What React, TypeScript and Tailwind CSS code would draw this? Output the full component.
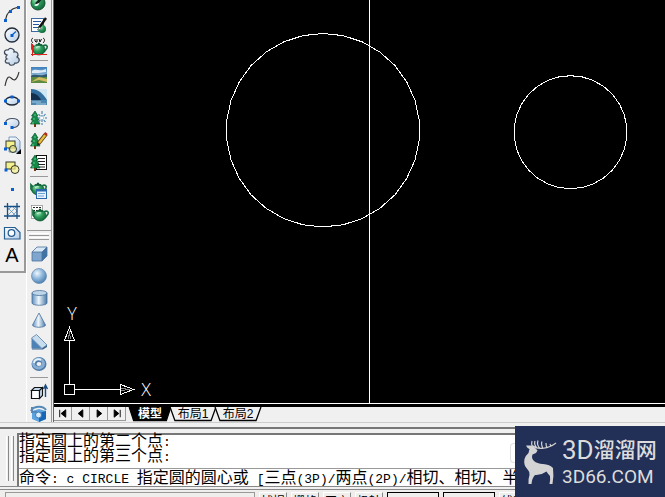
import type { ReactNode } from "react"

interface Tool {
  label: string
  icon: ReactNode
}

const BLUE = "#0a5fd0"

function Dot({ x, y }: { x: number; y: number }) {
  return <rect x={x - 1.5} y={y - 1.5} width={3} height={3} fill={BLUE} />
}

function Teapot({ x = 0, y = 0 }: { x?: number; y?: number }) {
  return (
    <g transform={`translate(${x} ${y})`}>
      <path d="M3 5 1 3v4l3 4" fill="none" stroke="#176f43" strokeWidth={1.8} />
      <path d="M12 4c3-2 5 0 4 2l-3 4" fill="none" stroke="#176f43" strokeWidth={1.6} />
      <ellipse cx={8} cy={7.5} rx={6} ry={5.5} fill="url(#green)" stroke="#105a34" strokeWidth={0.7} />
      <path d="M5 3h6M7 1.500h2" stroke="#105a34" strokeWidth={1.5} />
      <path d="M5 6c1-1.500 3-1.500 4-1" stroke="#c6f2d4" strokeWidth={1} fill="none" />
    </g>
  )
}

function Tree() {
  return (
    <g>
      <path d="M5 1 1.500 6H3L1 10h2l-2.500 4H10L7.500 10H9L6.500 6H8z" fill="#158a48" stroke="#0b5a30" strokeWidth={0.7} />
      <path d="M4 5h2M3 9h2M2 13h2" stroke="#5bd08a" />
      <path d="M5 14v3" stroke="#6b3a12" strokeWidth={2} />
    </g>
  )
}

function Icon({ children }: { children: ReactNode }) {
  return (
    <svg width={18} height={18} viewBox="0 0 18 18" className="shrink-0 overflow-visible" aria-hidden="true">
      {children}
    </svg>
  )
}

// shared gradients, referenced by id from every icon
function IconDefs() {
  return (
    <svg width={0} height={0} className="absolute" aria-hidden="true">
      <defs>
        <radialGradient id="ball" cx="0.38" cy="0.32" r="0.7">
          <stop offset="0" stopColor="#f0f7fd" />
          <stop offset="0.5" stopColor="#92b9dd" />
          <stop offset="1" stopColor="#4c7fb2" />
        </radialGradient>
        <linearGradient id="steel" x1="0" x2="1">
          <stop offset="0" stopColor="#5d8dbd" />
          <stop offset="0.45" stopColor="#eef6fc" />
          <stop offset="1" stopColor="#4677a8" />
        </linearGradient>
        <linearGradient id="paper" x1="0" y1="0" x2="1" y2="1">
          <stop offset="0" stopColor="#ffffff" />
          <stop offset="1" stopColor="#b5cde6" />
        </linearGradient>
        <radialGradient id="green" cx="0.35" cy="0.3" r="0.8">
          <stop offset="0" stopColor="#9be5b0" />
          <stop offset="0.45" stopColor="#2a9a5a" />
          <stop offset="1" stopColor="#0d5c35" />
        </radialGradient>
        <linearGradient id="sky" x1="0" y1="0" x2="0" y2="1">
          <stop offset="0" stopColor="#3c7fbd" />
          <stop offset="1" stopColor="#dceaf2" />
        </linearGradient>
      </defs>
    </svg>
  )
}

const drawTools: Tool[] = [
  {
    label: "圆弧",
    icon: <><path d="M2.500 16C3 11 6 5 15.500 3" fill="none" stroke="#333" strokeWidth={1.2} /><Dot x={2.5} y={16.5} /><Dot x={7.5} y={7.5} /><Dot x={15.5} y={3.5} /></>,
  },
  {
    label: "圆",
    icon: <><circle cx={9} cy={9} r={7} fill="url(#paper)" stroke="#222b38" strokeWidth={1.3} /><path d="m9 9 4-3.500" stroke={BLUE} strokeWidth={1.2} /><Dot x={9} y={9.5} /></>,
  },
  {
    label: "修订云线",
    icon: <path d="M4 7C0 6 1 1 5 2c2-3 7-1 6 2 4-1 5 3 3 5 4 2 2 7-2 6-1 3-6 3-6 0-4 1-5-3-2-4-2-1-1-3 0-4z" fill="url(#paper)" stroke="#3c4858" strokeWidth={1.2} />,
  },
  { label: "样条曲线", icon: <path d="M2 16C4 6 6 6 8 8s5 5 8-6" fill="none" stroke="#333" strokeWidth={1.1} /> },
  {
    label: "椭圆",
    icon: <><ellipse cx={9} cy={9} rx={6.5} ry={4} fill="url(#paper)" stroke="#1c2838" strokeWidth={1.3} /><Dot x={2.5} y={9} /><Dot x={9} y={5} /><Dot x={15.5} y={9} /></>,
  },
  {
    label: "椭圆弧",
    icon: <><path d="M2.500 9C3 3 16 3 16 9c0 3-3 5-7 4.500" fill="url(#paper)" stroke="#445064" strokeWidth={1.2} /><Dot x={2.5} y={9.5} /><Dot x={9} y={13.5} /></>,
  },
  {
    label: "插入块",
    icon: (
      <>
        <path d="M6 1h7l4 4v11H6z" fill="url(#paper)" stroke="#5a82ae" strokeWidth={0.8} />
        <rect x={3} y={5} width={9} height={7} fill="#f6f08c" stroke="#30382e" />
        <circle cx={10} cy={13} r={3.5} fill="#f6f08c" fillOpacity={0.7} stroke="#30382e" />
        <Dot x={2.5} y={13} />
        <path d="M18 13v5h-5z" fill="#000" />
      </>
    ),
  },
  {
    label: "创建块",
    icon: <><rect x={3} y={4} width={9} height={7} fill="#f6f08c" stroke="#30382e" /><circle cx={12} cy={11.5} r={4} fill="#f6f08c" fillOpacity={0.7} stroke="#30382e" /><Dot x={3} y={12} /></>,
  },
  { label: "点", icon: <Dot x={9.5} y={9.5} /> },
  {
    label: "图案填充",
    icon: (
      <>
        <path d="m4 9 5-5M4 14 14 4M9 14l5-5M4 5l9 9M9 4l5 5" stroke="#6794bb" strokeWidth={0.8} />
        <path d="M1 4.500h16M1 14h16M4.500 1v16M14 1v16" stroke="#164f86" strokeWidth={1.3} />
      </>
    ),
  },
  {
    label: "面域",
    icon: <><path d="M1.500 3.500H12l5 5v6.500H1.500z" fill="url(#paper)" stroke="#255d92" strokeWidth={1.2} /><circle cx={8.5} cy={9} r={3.3} fill="#fff" stroke="#255d92" strokeWidth={1.3} /></>,
  },
]

const renderTools: Tool[] = [
  {
    label: "渲染",
    icon: <><circle cx={8} cy={9} r={7} fill="url(#green)" stroke="#14522f" /><path d="m6 10 3-3 5-6" stroke="#17241d" strokeWidth={2.5} /><path d="M4 11c2 2 5 1 5-2z" fill="#fff" /></>,
  },
  {
    label: "场景",
    icon: (
      <>
        <rect x={1.5} y={2.5} width={12} height={13} fill="#fff" stroke="#3a6ba4" />
        <path d="M3 5.500h8M3 8.500h6M3 11.500h5" stroke="#2858a0" />
        <circle cx={12} cy={13} r={4} fill="url(#green)" />
        <path d="m9 12 7-10" stroke="#111" strokeWidth={2.4} />
        <path d="m7 14 3-3 1 2z" fill="#fff" stroke="#555" strokeWidth={0.5} />
      </>
    ),
  },
  {
    label: "光源",
    icon: (
      <>
        <Teapot x={1} y={4} />
        <path d="M2.500 6v12M1 16.500h16" stroke="#e0201a" />
        <path d="M3 0C1 1 1 3 3 5M5 1v2l1 1h1V1M9 1l1 3 1.500-3M13 0c2 1 2 3 0 5" stroke="#111" fill="none" />
      </>
    ),
  },
]

const sceneTools: Tool[] = [
  {
    label: "背景",
    icon: (
      <>
        <rect x={1} y={1} width={16} height={16} fill="url(#sky)" />
        <path d="M2 5c4-3 7 1 14-2v3c-6 1-9 1-14 1z" fill="#fff" opacity={0.8} />
        <path d="M1 10c4-3 7 1 16-2v3H1z" fill="#315873" />
        <path d="M1 11h16v6H1z" fill="#5c8b3f" />
        <path d="m1 16 8-5 8 2v3l-8-2z" fill="#d0ba62" />
      </>
    ),
  },
  {
    label: "雾化",
    icon: (
      <>
        <rect x={1} y={1} width={16} height={16} fill="#d1e5f2" />
        <path d="M1 1c8 0 12 5 16 11H1z" fill="#326d9e" />
        <path d="M1 5c5 0 8 3 10 7H1z" fill="#142f4c" />
        <path d="M1 12h16v5H1z" fill="#4d87b0" />
        <path d="M2 14h9M6 16h10" stroke="#a5cbe2" />
      </>
    ),
  },
  {
    label: "新建配景",
    icon: <><Tree /><path d="M12 1v14M7 8h10M8.500 4l7 8M15.500 4l-7 8" stroke="#3c7fac" strokeWidth={1.1} strokeDasharray="3 1" /><circle cx={12} cy={8} r={1.5} fill="#fff" /></>,
  },
  {
    label: "编辑配景",
    icon: <><Tree /><path d="m8 12 8-10" stroke="#513a15" strokeWidth={4} /><path d="m9 11 7-9" stroke="#e6bd3b" strokeWidth={2.3} /><path d="m15 3 1.500-2" stroke="#b22a20" strokeWidth={3} /><path d="m7 14 .5-3 2 1.500z" fill="#222" /></>,
  },
  {
    label: "配景库",
    icon: <><rect x={6.5} y={1.5} width={10} height={14} fill="#fff" stroke="#111" /><path d="M8 4.500h7M8 7.500h7M8 10.500h7M8 13h7" stroke="#222" /><Tree /></>,
  },
]

const prefTools: Tool[] = [
  {
    label: "渲染系统配置",
    icon: <><Teapot x={0} y={0} /><rect x={6.5} y={7.5} width={10} height={9} fill="#e8f3ff" stroke="#2a66ac" /><path d="M6 8.500h11" stroke="#2a66ac" strokeWidth={2} /><path d="M8 11.500h7M8 14h6" stroke="#6da0d4" /></>,
  },
  {
    label: "统计信息",
    icon: <><rect x={1.5} y={1.5} width={11} height={13} fill="#fff" stroke="#888" strokeWidth={0.7} /><path d="M3 3.500h8M3 6.500h8M3 9.500h5" stroke="#222" strokeDasharray="2 1" /><Teapot x={2} y={4} /></>,
  },
]

const solidTools: Tool[] = [
  {
    label: "长方体",
    icon: (
      <>
        <path d="M2 7h10v9H2z" fill="#7fa6ce" />
        <path d="m2 7 5-5h10l-5 5z" fill="#d8e8f6" />
        <path d="m12 7 5-5v9l-5 5z" fill="#3f72a6" />
        <path d="m2 7 5-5h10v9l-5 5H2zM2 7h10l5-5M12 7v9" fill="none" stroke="#4b719a" strokeWidth={0.8} />
      </>
    ),
  },
  { label: "球体", icon: <circle cx={9} cy={9} r={7.5} fill="url(#ball)" stroke="#6388ad" strokeWidth={0.7} /> },
  {
    label: "圆柱体",
    icon: <><path d="M2 4v10c0 3 15 3 15 0V4z" fill="url(#steel)" stroke="#4a719b" strokeWidth={0.8} /><ellipse cx={9.5} cy={4} rx={7.5} ry={2.5} fill="#bed5ea" stroke="#4a719b" strokeWidth={0.8} /></>,
  },
  { label: "圆锥体", icon: <path d="M9 2 2.500 14c0 3 13 3 13 0z" fill="url(#steel)" stroke="#4a719b" strokeWidth={0.8} /> },
  {
    label: "楔体",
    icon: <><path d="M1.500 5v10.500H12z" fill="#4d82b7" /><path d="m1.500 5 5-3.500L17 12l-5 3.500z" fill="#c7dced" stroke="#5980a8" strokeWidth={0.8} /><path d="M12 15.500 17 12v2l-4 2.500H2v-1z" fill="#3c668f" /></>,
  },
  {
    label: "圆环",
    icon: <><ellipse cx={9} cy={9} rx={5} ry={4.5} fill="none" stroke="#517ca7" strokeWidth={5} /><ellipse cx={8.5} cy={8.5} rx={5} ry={4.5} fill="none" stroke="#87afd6" strokeWidth={3} /><path d="M4 8c0-3 4-5 7-3" fill="none" stroke="#e9f4fc" strokeWidth={1.8} /></>,
  },
]

const extrudeTools: Tool[] = [
  {
    label: "拉伸",
    icon: <><path d="M1.500 7.500h8v8h-8z" fill="#fff" stroke="#111" strokeWidth={1.2} /><path d="m1.500 7.500 3-3h8l-3 3zM9.500 7.500l3-3v8l-3 3z" fill="#bdd5eb" stroke="#111" strokeWidth={1.1} /><path d="M15.500 14V3M13.500 6l2-4 2 4" fill="none" stroke="#174d85" strokeWidth={1.4} /></>,
  },
  {
    label: "旋转",
    icon: <><path d="m2 6 7-2 7 2v8l-7 3-7-3z" fill="#5da3df" /><path d="m9 8 7-2v8l-7 3z" fill="#1765b5" /><path d="M1 6c2-5 12-6 15-1M2 2v5h5" fill="none" stroke="#5488b8" strokeWidth={2} /><circle cx={8.5} cy={10} r={3} fill="#d8ecfb" stroke="#3c79b5" /></>,
  },
]

function ToolButtons({ tools }: { tools: Tool[] }) {
  return tools.map((t) => (
    <button key={t.label} type="button" aria-label={t.label} className="flex h-[22px] w-full shrink-0 items-center justify-center">
      <Icon>{t.icon}</Icon>
    </button>
  ))
}

function Separator() {
  return <div className="mx-[3px] mt-[2px] mb-[3px] h-px shrink-0 bg-[#999]" />
}

// circles are drawn as coarse polygons, like the viewport does at low VIEWRES
function circlePoints(cx: number, cy: number, r: number, sides: number) {
  return Array.from({ length: sides }, (_, i) => {
    const a = ((i + 0.5) * 2 * Math.PI) / sides
    return `${(cx + r * Math.cos(a)).toFixed(1)},${(cy + r * Math.sin(a)).toFixed(1)}`
  }).join(" ")
}

function DrawingCanvas() {
  return (
    <div className="relative min-h-0 flex-1 overflow-hidden bg-black">
      <svg className="absolute inset-0 size-full" fill="none" stroke="#fff" shapeRendering="crispEdges" aria-label="绘图区">
        <g transform="translate(0.5 0.5)">
          <polygon points={circlePoints(268.5, 129.7, 96.7, 30)} />
          <polygon points={circlePoints(516, 131.7, 56.5, 30)} />
          <path d="M315-1v406" />
          {/* UCS marker */}
          <path d="M10 384h10v10H10zM15 384v-44M20 389h46M10 340h10l-5-13zM66 384v10l13-5z" />
          <path d="m14 339 1-8 1 8M67 388l8 1-8 1" stroke="#888" />
        </g>
        <g fill="#fff" stroke="none" className="font-['Open_Sans'] text-[18px] font-light" textAnchor="middle">
          <text x={18} y={320}>Y</text>
          <text x={92} y={396}>X</text>
        </g>
      </svg>
    </div>
  )
}

const navButtons = [
  { label: "第一个", d: "M5.500 3v8M12 3v8L7 7z" },
  { label: "上一个", d: "M11 3v8L6 7z" },
  { label: "下一个", d: "M7 3v8l5-4z" },
  { label: "最后一个", d: "M6 3v8l5-4zM12.500 3v8" },
]

function LayoutTab({ label, active = false }: { label: string; active?: boolean }) {
  return (
    <button
      type="button"
      className={
        active
          ? "relative h-[14px] w-10 text-xs leading-[14px] font-bold text-white"
          : "relative h-[14px] w-11 text-xs leading-[14px] text-black"
      }
    >
      <svg className="absolute inset-0 size-full overflow-visible" viewBox="0 0 45 14" preserveAspectRatio="none" aria-hidden="true">
        <path d="M-1 0 4 13.500h37L46 0" fill={active ? "#000" : "#f0f0f0"} stroke="#000" strokeWidth={1.3} />
      </svg>
      <span className="relative whitespace-nowrap">{label}</span>
    </button>
  )
}

function LayoutTabs() {
  return (
    <div className="flex h-[15px] shrink-0 bg-[#f0f0f0] font-['Liberation_Sans','Noto_Sans_CJK_SC',sans-serif]">
      {navButtons.map((b) => (
        <button key={b.label} type="button" aria-label={b.label} className="h-[14px] w-[18px] border-r border-b border-[#999]">
          <svg width={17} height={13} viewBox="0 0 17 14" fill="#000" stroke="#000" aria-hidden="true">
            <path d={b.d} />
          </svg>
        </button>
      ))}
      <div className="ml-1 flex gap-px">
        <LayoutTab label="模型" active />
        <LayoutTab label="布局1" />
        <LayoutTab label="布局2" />
      </div>
    </div>
  )
}

function Latin({ children }: { children: string }) {
  return <span className="text-[13px] whitespace-pre">{children}</span>
}

function CommandWindow() {
  return (
    <div className="flex h-[54px] border-b border-[#888]">
      <div className="mt-[3px] mr-[3px] ml-[6px] flex h-[45px] gap-[2px]">
        <div className="w-[3px] border-r border-l border-r-[#888] border-l-white" />
        <div className="w-[3px] border-r border-l border-r-[#888] border-l-white" />
      </div>
      <div className="flex min-w-0 flex-1 flex-col border-t-2 border-l-2 border-[#777] bg-white font-['Liberation_Mono','Noto_Sans_CJK_SC',monospace] text-base text-black">
        <div className="h-[33px] leading-[14px]">
          <p>指定圆上的第二个点<Latin>:</Latin></p>
          <p>指定圆上的第三个点<Latin>:</Latin></p>
        </div>
        <div className="flex h-[18px] border-t border-[#999] leading-5">
          <label htmlFor="command" className="shrink-0 whitespace-nowrap">
            命令<Latin>: c CIRCLE </Latin>指定圆的圆心或<Latin>{" ["}</Latin>三点<Latin>(3P)/</Latin>两点<Latin>(2P)/</Latin>相切、相切、半径<Latin>(T)]:</Latin>
          </label>
          <input id="command" type="text" className="w-0 min-w-0 flex-1 outline-none" />
        </div>
      </div>
    </div>
  )
}

const modes = [
  { label: "捕捉", on: false },
  { label: "栅格", on: false },
  { label: "正交", on: false },
  { label: "极轴", on: false },
  { label: "对象捕捉", on: true },
  { label: "对象追踪", on: true },
  { label: "线宽", on: false },
]

function StatusBar() {
  return (
    <div className="flex h-[7px] gap-1 overflow-hidden bg-[#f0eded] pt-[2px] pl-[5px] font-['Liberation_Sans','Noto_Sans_CJK_SC',sans-serif] text-xs">
      <div className="h-5 w-[250px] shrink-0 border border-[#999]" />
      {modes.map((m) => (
        <button
          key={m.label}
          type="button"
          aria-pressed={m.on}
          className={
            m.on
              ? "h-5 w-[52px] shrink-0 border border-black pt-1 leading-4 whitespace-nowrap"
              : "h-5 w-7 shrink-0 border border-t-white border-r-[#888] border-b-[#888] border-l-white leading-[18px] whitespace-nowrap"
          }
        >
          {m.label}
        </button>
      ))}
    </div>
  )
}

function SiteBadge() {
  return (
    <div className="absolute right-0 bottom-0 flex h-[71px] w-[150px] items-center bg-[#222f57] text-[#dcdcdc]">
      <div className="absolute top-[17px] -left-[5px] h-5 w-[5px] rounded-l-sm border border-r-0 border-[#e0e0e0]" />
      <svg width={34} height={46} viewBox="0 0 34 46" className="ml-2 shrink-0" fill="#d4d4d4" aria-hidden="true">
        <path d="M3 6.500 10 6.500 14.500 11.500 13 14 9.500 15.500Q8 19 11 22 14 24.500 20 25 27 25.500 30 29 31 36 29.500 45H26.500Q27.500 40 27 37 25 35 23.500 32.500 18 36.500 12 36 9 39 8.500 45H5.500Q5 40 6.500 36 7 33 5 31 0 26 1.500 20 3 16 5.500 14L6.500 10Q4 9 3 6.500Z" />
        <path d="M9.500 7.500C8 5 8.500 3.500 9 2M10 7c5 4 15 3 23-3M14 9c-2-2-3-4-2-7M17 9.500c-2-2-3-5-2-8M20 9.500c-1-2-2-5-1-7M24 9c-1-2-1-3-1-5M28 7.500 27 5" fill="none" stroke="#d4d4d4" strokeWidth={1.2} />
      </svg>
      <div className="ml-[5px] font-['Roboto','Noto_Sans_CJK_SC',sans-serif] whitespace-nowrap">
        <div className="flex h-[31px] items-center text-[21px] leading-[31px]">
          <span className="text-[26px]">3D</span>
          <span className="font-medium">溜溜网</span>
        </div>
        <div className="text-[19px] leading-[22px]">3D66.COM</div>
      </div>
    </div>
  )
}

export default function App() {
  return (
    <div className="relative flex h-screen flex-col overflow-hidden bg-[#f0f0f0]">
      <IconDefs />
      <div className="flex min-h-0 flex-1">
        <div className="flex w-[26px] shrink-0 flex-col">
          <div className="border-r-2 border-b-2 border-[#999] pt-[2px] pb-[3px]">
            <ToolButtons tools={drawTools} />
            <button type="button" aria-label="多行文字" className="h-[22px] w-full text-center font-['Liberation_Sans',sans-serif] text-xl leading-[22px] text-black">
              A
            </button>
          </div>
        </div>

        <div className="flex w-[26px] shrink-0 flex-col border-r border-l border-r-[#999] border-l-white">
          <div className="-mt-2 border-b border-[#999] pb-[6px]">
            <ToolButtons tools={renderTools} />
            <Separator />
            <ToolButtons tools={sceneTools} />
            <Separator />
            <ToolButtons tools={prefTools} />
          </div>
          <div className="mx-[2px] mt-[2px] mb-[3px] flex shrink-0 flex-col gap-px">
            <div className="h-[3px] border-t border-b border-t-white border-b-[#999]" />
            <div className="h-[3px] border-t border-b border-t-white border-b-[#999]" />
          </div>
          <ToolButtons tools={solidTools} />
          <Separator />
          <ToolButtons tools={extrudeTools} />
        </div>

        <div className="ml-px flex min-w-0 flex-1 flex-col border-l border-[#666]">
          <div className="flex min-h-0 flex-1 flex-col border-b-[3px] border-black">
            <DrawingCanvas />
            <div className="h-px shrink-0 bg-white" />
          </div>
          <LayoutTabs />
        </div>
      </div>

      <div className="shrink-0">
        <div className="h-[7px] border-t border-b-2 border-t-[#ccc] border-b-[#777]" />
        <div className="h-1" />
        <CommandWindow />
        <div className="h-[3px] border-b border-[#888]" />
        <StatusBar />
      </div>
      <SiteBadge />
    </div>
  )
}
